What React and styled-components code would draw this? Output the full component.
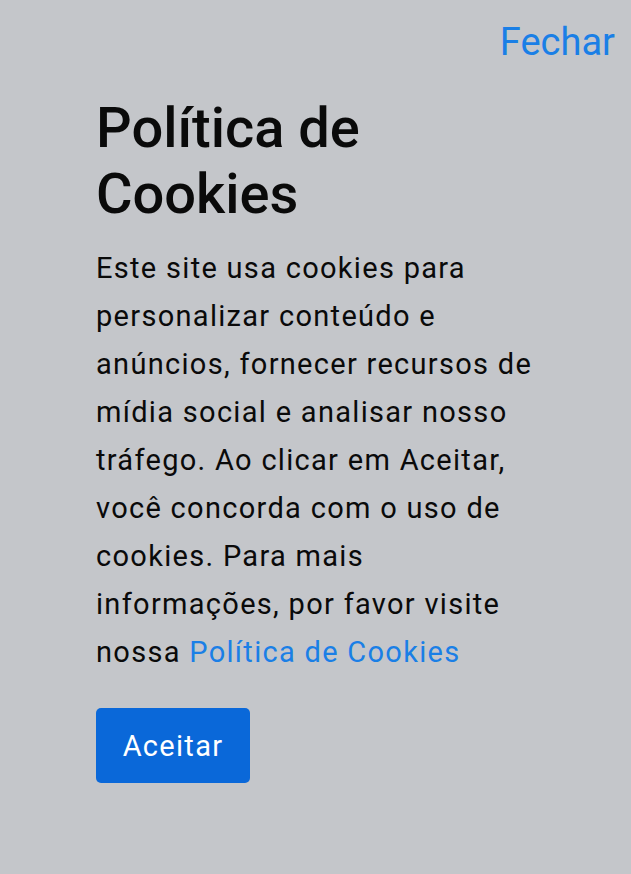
import React from 'react'
import styled, { createGlobalStyle } from 'styled-components'

const GlobalStyle = createGlobalStyle`
  html, body {
    margin: 0;
    padding: 0;
    background: #c4c6ca;
  }
  body {
    font-family: Roboto, "Liberation Sans", sans-serif;
    color: #0a0a0a;
  }
`;

const App = () => {
  return (
    <>
      <GlobalStyle />
      <Page>
        <TopBar>
          <CloseLink href="#">Fechar</CloseLink>
        </TopBar>
        <Content>
          <Title>Política de Cookies</Title>
          <Body>
            Este site usa cookies para personalizar conteúdo e anúncios, fornecer
            recursos de mídia social e analisar nosso tráfego. Ao clicar em Aceitar,
            você concorda com o uso de cookies. Para mais informações, por favor
            visite nossa <TextLink href="#">Política de Cookies</TextLink>
          </Body>
          <AcceptButton type="button">Aceitar</AcceptButton>
        </Content>
      </Page>
    </>
  )
}

const Page = styled.main`
  min-height: 874px;
  background: #c4c6ca;
`;

const TopBar = styled.header`
  display: flex;
  justify-content: flex-end;
  padding: 20px 16px 0;
`;

const CloseLink = styled.a`
  font-size: 38px;
  line-height: 44px;
  color: #1a7fe6;
  text-decoration: none;
`;

const Content = styled.section`
  display: flex;
  flex-direction: column;
  align-items: flex-start;
  padding: 0 0 0 96px;
  max-width: 446px;
`;

const Title = styled.h1`
  margin: 31px 0 17px;
  font-size: 56px;
  line-height: 66px;
  font-weight: 500;
  color: #0a0a0a;
`;

const Body = styled.p`
  margin: 0;
  font-size: 29px;
  line-height: 48px;
  letter-spacing: 1.3px;
`;

const TextLink = styled.a`
  color: #1a7fe6;
  text-decoration: none;
`;

const AcceptButton = styled.button`
  margin-top: 32px;
  height: 75px;
  width: 154px;
  padding: 0;
  border: none;
  border-radius: 5px;
  background: #0a68d9;
  color: #fff;
  font-family: Roboto, "Liberation Sans", sans-serif;
  font-size: 29px;
  letter-spacing: 1.3px;
  cursor: pointer;
`;

export default App
